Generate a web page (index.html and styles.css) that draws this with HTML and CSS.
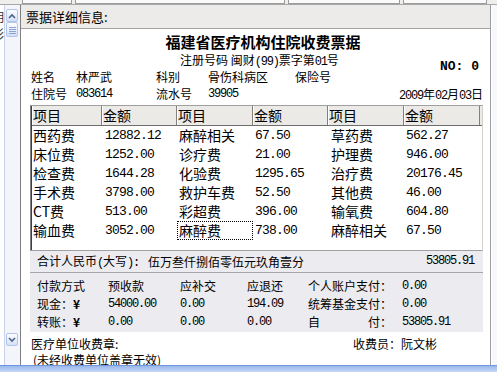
FILE: index.html
```html
<!DOCTYPE html>
<html>
<head>
<meta charset="utf-8">
<link rel="stylesheet" href="styles.css">
</head>
<body>
<div class="win">
  <div class="topstrip"><span class="tb t1"></span><span class="tb t2"></span><span class="tb t3"></span><span class="tb t4"></span></div>
  <div class="main">
    <div class="leftstrip">
      <div class="cutlist"><div class="frag">明</div><div class="frag">影</div></div>
      <div class="vscroll">
        <div class="sbtn"><svg width="8" height="6" viewBox="0 0 8 6"><polyline points="1,5 4,2 7,5" fill="none" stroke="#4d6185" stroke-width="1.6"/></svg></div>
        <div class="thumb"><svg width="7" height="8" viewBox="0 0 7 8"><path d="M0 1.5h7M0 3.5h7M0 5.5h7M0 7.5h7" stroke="#8ea4d2" stroke-width="1"/></svg></div>
        <div class="track"></div>
        <div class="sbtn"><svg width="8" height="6" viewBox="0 0 8 6"><polyline points="1,1 4,4 7,1" fill="none" stroke="#4d6185" stroke-width="1.6"/></svg></div>
        <div class="sbend"></div>
      </div>
    </div>
    <div class="panel">
      <div class="phead">票据详细信息:</div>
      <div class="receipt">
        <div class="title">福建省医疗机构住院收费票据</div>
        <div class="meta">
          <div class="meta-left">
            <div class="reg">注册号码 闽财<span class="num">(99)</span>票字第<span class="num">01</span>号</div>
            <div class="inforow">
              <span class="l1">姓名</span><span class="v1">林严武</span><span class="l2">科别</span><span class="v2">骨伤科病区</span><span>保险号</span>
            </div>
          </div>
          <div class="no">NO: 0</div>
        </div>
        <div class="inforow row4">
          <span class="l1">住院号</span><span class="v1 num">083614</span><span class="l2">流水号</span><span class="v2 num">39905</span>
          <span class="date"><span class="num">2009</span>年<span class="num">02</span>月<span class="num">03</span>日</span>
        </div>
        <div class="grid">
          <div class="ginner">
            <div class="ghead">
              <div class="hc">项目</div><div class="hc">金额</div><div class="hc">项目</div><div class="hc">金额</div><div class="hc">项目</div><div class="hc">金额</div><div class="hfill"></div>
            </div>
            <div class="gbody">
              <div class="grow"><div class="gc">西药费</div><div class="gc tn">12882.12</div><div class="gc">麻醉相关</div><div class="gc tn">67.50</div><div class="gc">草药费</div><div class="gc tn">562.27</div></div>
              <div class="grow"><div class="gc">床位费</div><div class="gc tn">1252.00</div><div class="gc">诊疗费</div><div class="gc tn">21.00</div><div class="gc">护理费</div><div class="gc tn">946.00</div></div>
              <div class="grow"><div class="gc">检查费</div><div class="gc tn">1644.28</div><div class="gc">化验费</div><div class="gc tn">1295.65</div><div class="gc">治疗费</div><div class="gc tn">20176.45</div></div>
              <div class="grow"><div class="gc">手术费</div><div class="gc tn">3798.00</div><div class="gc">救护车费</div><div class="gc tn">52.50</div><div class="gc">其他费</div><div class="gc tn">46.00</div></div>
              <div class="grow"><div class="gc">CT费</div><div class="gc tn">513.00</div><div class="gc">彩超费</div><div class="gc tn">396.00</div><div class="gc">输氧费</div><div class="gc tn">604.80</div></div>
              <div class="grow"><div class="gc">输血费</div><div class="gc tn">3052.00</div><div class="gc focus">麻醉费</div><div class="gc tn">738.00</div><div class="gc">麻醉相关</div><div class="gc tn">67.50</div></div>
            </div>
          </div>
        </div>
        <div class="total">
          <span>合计人民币<span class="num">(</span>大写<span class="num">):</span></span><span class="words">伍万叁仟捌佰零伍元玖角壹分</span><span class="sum num">53805.91</span>
        </div>
        <div class="pay">
          <div class="prow"><span>付款方式</span><span>预收款</span><span>应补交</span><span>应退还</span><span>个人账户支付：</span><span class="num">0.00</span></div>
          <div class="prow"><span>现金：<b class="yen">¥</b></span><span class="num">54000.00</span><span class="num">0.00</span><span class="num">194.09</span><span>统筹基金支付：</span><span class="num">0.00</span></div>
          <div class="prow"><span>转账：<b class="yen">¥</b></span><span class="num">0.00</span><span class="num">0.00</span><span class="num">0.00</span><span class="just"><span>自</span><span>付：</span></span><span class="num">53805.91</span></div>
        </div>
        <div class="foot">
          <div class="f1"><span class="stamp">医疗单位收费章:</span><span>收费员：阮文彬</span></div>
          <div class="f2">(未经收费单位盖章无效)</div>
        </div>
      </div>
    </div>
    <div class="rightstrip"></div>
  </div>
  <div class="bottomstrip"></div>
</div>
</body>
</html>
```

FILE: styles.css
```css
* { box-sizing: border-box; margin: 0; padding: 0; }
body {
  width: 497px; height: 372px; overflow: hidden;
  font-family: "Noto Sans CJK SC", "Liberation Sans", sans-serif;
  font-size: 12px; color: #000; background: #fff;
}
.win { display: flex; flex-direction: column; height: 372px; }

.topstrip { height: 5px; display: flex; background: #efeeec; border-bottom: 1px solid #a7a7a7; }
.tb { height: 4px; border: 1px solid #9c9c9c; border-top: none; background: #fafafa; }
.t1 { width: 50px; margin-left: 22px; }
.t2 { width: 210px; margin-left: 3px; }
.t3 { width: 112px; margin-left: 3px; }
.t4 { width: 84px; margin-left: 3px; }

.main { display: flex; height: 360px; }

.leftstrip { width: 21px; display: flex; border-right: 1px solid #7f7f7f; background: #fff; }
.cutlist { width: 5px; overflow: hidden; border-right: 1px solid #c9d3e6; padding-top: 3px; }
.frag { margin-left: -8px; width: 12px; font-size: 12px; line-height: 17px; color: #333; }
.vscroll { width: 15px; display: flex; flex-direction: column; padding: 4px 2px 0 1px; background: #f3f5fa; }
.sbtn, .thumb {
  border: 1px solid #b3c5ea; border-radius: 2px;
  background: linear-gradient(#fdfeff, #d3dff8);
  display: flex; align-items: center; justify-content: center;
}
.sbtn { height: 13px; }
.thumb { height: 15px; }
.track { flex: 1; }
.sbend { height: 19px; }

.panel { width: 470px; display: flex; flex-direction: column; border-right: 1px solid #9d9d9d; }
.phead {
  height: 24px; background: #ecebe9; border-bottom: 1px solid #a3a3a3;
  padding-left: 5px; font-size: 13px; line-height: 23px;
}
.receipt { flex: 1; padding: 3px 6px 0 9px; background: #fff; }

.title { font-size: 15px; font-weight: bold; line-height: 19px; text-align: center; padding-left: 12px; }
.meta { display: flex; align-items: center; padding-top: 2px; }
.reg { padding-left: 150px; line-height: 14px; }
.inforow { display: flex; line-height: 15px; padding-left: 1px; }
.l1 { width: 45px; }
.v1 { width: 80px; }
.l2 { width: 52px; }
.v2 { width: 87px; }
.no {
  margin-left: auto; margin-right: 5px; margin-bottom: 4px;
  font-family: "Liberation Mono", monospace; font-weight: bold; font-size: 13px;
}
.row4 { margin-top: 3px; line-height: 14px; }
.date { margin-left: auto; padding-right: 1px; }

.num { font-family: "Liberation Mono", monospace; font-size: 12px; letter-spacing: -1.2px; }
.tn { font-family: "Liberation Mono", monospace; font-size: 13px; letter-spacing: -0.8px; }

.grid {
  width: 453px; margin-top: 2px;
  border-top: 1px solid #a0a0a0; border-left: 1px solid #808080;
  border-right: 1px solid #d4d0c8; border-bottom: 1px solid #a0a0a0;
}
.ginner { border-left: 1px solid #404040; }
.ghead, .grow { display: grid; grid-template-columns: 70px 75px 76px 75px 76px 76px 2px; }
.ghead { height: 20px; background: #ebeae6; border-bottom: 1px solid #6e6e6e; }
.hc { border-left: 1px solid #fff; border-right: 1px solid #808080; font-size: 14px; line-height: 18px; }
.hfill { background: #ebeae6; }
.gbody { height: 124px; }
.grow { height: 19px; line-height: 19px; font-size: 14px; }
.gc { padding-left: 2px; white-space: nowrap; }
.grow .gc:nth-child(1) { padding-left: 1px; }
.grow .gc:nth-child(2), .grow .gc:nth-child(5) { padding-left: 3px; }
.focus { outline: 1px dotted #000; outline-offset: -1px; }

.total {
  width: 453px; height: 22px; display: flex; align-items: center;
  background: #ecebef; border-bottom: 1px solid #a6a6a6;
  padding: 0 9px 0 7px; line-height: 21px;
}
.words { margin-left: 9px; }
.sum { margin-left: auto; }

.pay { width: 453px; height: 59px; background: #ecebef; padding: 4px 0 1px 7px; }
.prow { display: grid; grid-template-columns: 71px 72px 67px 61px 94px auto; height: 18px; line-height: 18px; }
.yen { font-weight: bold; }
.just { display: flex; justify-content: space-between; width: 84px; }

.foot { padding-top: 4px; }
.f1 { display: flex; line-height: 16px; }
.stamp { width: 323px; padding-left: 1px; }
.f2 { line-height: 16px; padding-left: 3px; }

.rightstrip { width: 6px; background: #f7f8fb; border-left: 1px solid #ffffff; }
.bottomstrip { height: 7px; border-top: 1px solid #7096dd; background: linear-gradient(#9ab8ec, #c6d8f6); }
```
